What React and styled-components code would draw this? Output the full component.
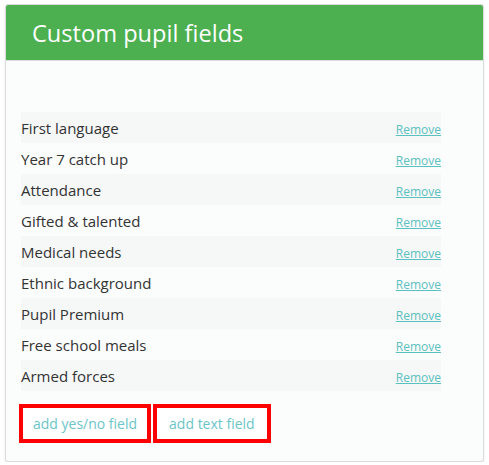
import React from "react";
import styled, { createGlobalStyle } from "styled-components";

const Global = createGlobalStyle`
  html, body { margin: 0; padding: 0; background: #ffffff; }
  body { font-family: "Open Sans", "Liberation Sans", sans-serif; }
`;

const Page = styled.div`
  padding: 4px 5px 0 5px;
`;

const Panel = styled.section`
  width: 477px;
  border: 1px solid #dcdcdc;
  border-radius: 3px;
  background: #fbfcfc;
  box-shadow: 0 1px 2px rgba(0, 0, 0, 0.12);
  overflow: hidden;
`;

const Header = styled.header`
  background: #4caf50;
  height: 55px;
  border-bottom: 1px solid #dddddd;
  display: flex;
  align-items: center;
  padding-left: 26px;
  box-sizing: content-box;
`;

const Title = styled.h2`
  margin: 0;
  font-weight: 400;
  font-size: 23.6px;
  color: #ffffff;
`;

const Body = styled.div`
  padding: 51px 15px 18px 15px;
`;

const List = styled.ul`
  list-style: none;
  margin: 0;
  padding: 0;
  width: 420px;
`;

const Row = styled.li`
  height: 31px;
  display: flex;
  align-items: center;
  justify-content: space-between;
  background: ${(p) => (p.$striped ? "#f6f8f8" : "transparent")};
`;

const Name = styled.span`
  font-size: 15px;
  color: #333333;
`;

const RemoveLink = styled.a`
  font-size: 12px;
  color: #5bc0c0;
  text-decoration: underline;
  cursor: pointer;
  margin-top: 3px;
`;

const Actions = styled.div`
  display: flex;
  gap: 2px;
  margin-top: 13px;
  margin-left: -2px;
`;

const AddButton = styled.button`
  font-family: "Open Sans", "Liberation Sans", sans-serif;
  font-size: 14px;
  color: #6cc5c8;
  background: #ffffff;
  border: 4px solid #ff0000;
  height: 39px;
  padding: 0 ${(p) => p.$pad}px;
  cursor: pointer;
`;

const fields = [
  "First language",
  "Year 7 catch up",
  "Attendance",
  "Gifted & talented",
  "Medical needs",
  "Ethnic background",
  "Pupil Premium",
  "Free school meals",
  "Armed forces",
];

export default function App() {
  return (
    <Page>
      <Global />
      <Panel>
        <Header>
          <Title>Custom pupil fields</Title>
        </Header>
        <Body>
          <List>
            {fields.map((f, i) => (
              <Row key={f} $striped={i % 2 === 0}>
                <Name>{f}</Name>
                <RemoveLink>Remove</RemoveLink>
              </Row>
            ))}
          </List>
          <Actions>
            <AddButton $pad={10}>add yes/no field</AddButton>
            <AddButton $pad={12}>add text field</AddButton>
          </Actions>
        </Body>
      </Panel>
    </Page>
  );
}
